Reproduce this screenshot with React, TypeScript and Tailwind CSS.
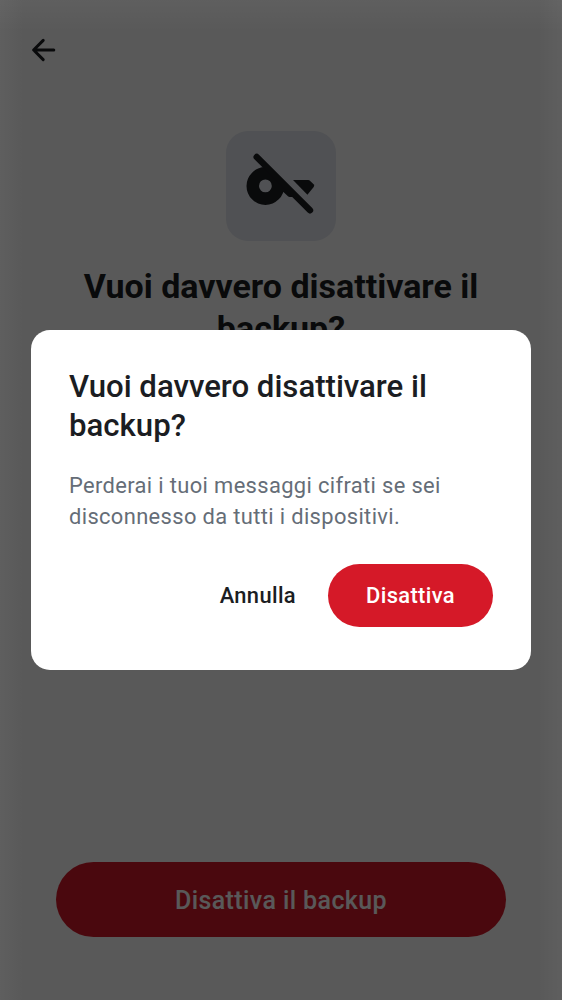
function BackIcon() {
  return (
    <svg width="38" height="38" viewBox="25 31 38 38" fill="none" stroke="#1b1d22" strokeWidth="3" strokeLinecap="round" strokeLinejoin="round">
      <path d="M53.8 50H33.8M43.2 40.4L33.6 50L43.2 59.6" />
    </svg>
  );
}

function KeyOffIcon() {
  return (
    <svg width="110" height="110" viewBox="226 131 110 110" fill="#1b1d22">
      <clipPath id="below-slash">
        <path d="M226 126L336 236V241H226Z" />
      </clipPath>
      <g clipPath="url(#below-slash)">
        <path fillRule="evenodd" d="M265.4 167.1a18.9 18.9 0 1 0 0 37.8a18.9 18.9 0 1 0 0-37.8ZM265.4 179.5a6.4 6.4 0 1 1 0 12.8a6.4 6.4 0 1 1 0-12.8Z" />
        <path d="M280 180H296V197H289.6L288.2 196.4L283.4 191.9H280Z" />
      </g>
      <path d="M293 180.1H308.2Q309.4 180.1 310.2 180.9L313.6 184.3Q314.8 185.6 313.7 187.1L307.4 194.7Z" />
      <path d="M256.7 157L310 210.3" stroke="#1b1d22" strokeWidth="6.4" strokeLinecap="round" />
    </svg>
  );
}

export default function App() {
  return (
    <div className="relative h-[1000px] w-[562px] overflow-hidden bg-white font-['Roboto',sans-serif] text-[#1b1d22]">
      <main className="flex h-full flex-col px-14 pt-[31px] pb-[63px]">
        <button aria-label="Indietro" className="-ml-[31px] size-[38px]">
          <BackIcon />
        </button>
        <div className="mt-[62px] size-[110px] self-center rounded-[22px] bg-[#e5e8ef]">
          <KeyOffIcon />
        </div>
        <h1 className="mt-[24px] text-center text-[34px] leading-[42px] font-bold">
          Vuoi davvero disattivare il<br />backup?
        </h1>
        <button className="mt-auto h-[75px] rounded-full bg-[#d51928] pt-[2px] text-[25px] font-medium tracking-[0.4px] text-white">
          Disattiva il backup
        </button>
      </main>

      <div className="absolute inset-0 flex items-center justify-center bg-black/65">
        <div className="absolute inset-y-0 left-0 w-6 bg-linear-to-r from-white/[0.035] to-transparent" />
        <div className="absolute inset-y-0 right-0 w-6 bg-linear-to-l from-white/[0.035] to-transparent" />
        <div className="absolute inset-x-0 top-0 h-8 bg-linear-to-b from-white/[0.035] to-transparent" />
        <section role="dialog" className="relative h-[340px] w-[500px] rounded-[19px] bg-white px-[38px] pt-[37px]">
          <h2 className="text-[31.2px] leading-[39px] font-medium tracking-[-0.02px]">
            Vuoi davvero disattivare il<br />backup?
          </h2>
          <p className="mt-[25px] text-[21.9px] leading-[31px] tracking-[0.36px] text-[#656d77]">
            Perderai i tuoi messaggi cifrati se sei<br />disconnesso da tutti i dispositivi.
          </p>
          <div className="mt-[32px] flex h-[63px] items-center justify-end gap-8 text-[21.9px] font-medium tracking-[0.36px]">
            <button className="pt-[2px]">Annulla</button>
            <button className="h-full w-[165px] rounded-full bg-[#d51928] pt-[2px] text-white">Disattiva</button>
          </div>
        </section>
      </div>
    </div>
  );
}
